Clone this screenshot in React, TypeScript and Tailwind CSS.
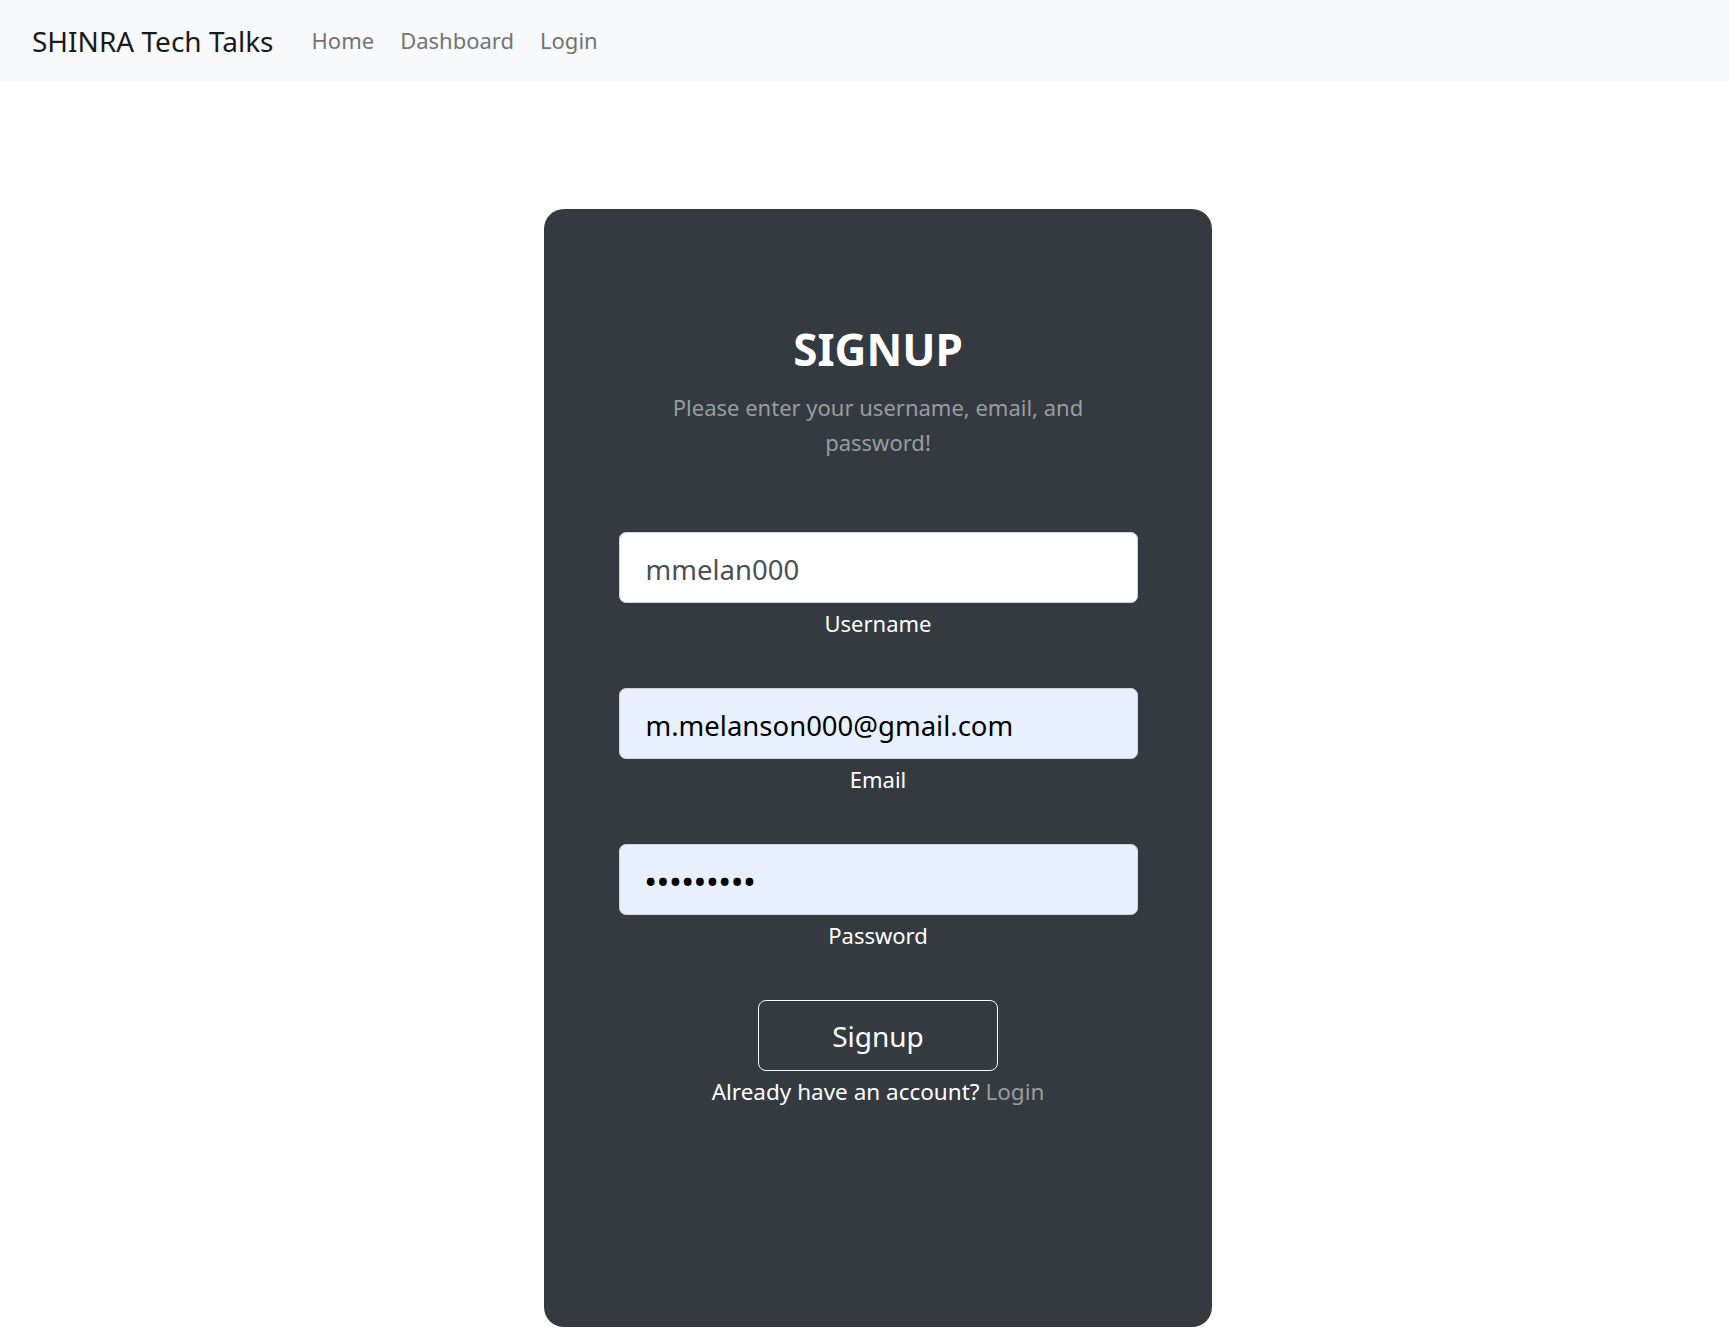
import React from "react";

function Field({ value, label, bg, color, dots }: { value: string; label: string; bg: string; color: string; dots?: boolean }) {
  return (
    <div className="flex flex-col items-center mb-[48px]">
      <input
        readOnly
        value={value}
        className={`w-[519px] h-[71px] rounded-[7px] border border-[#ced4da] px-[26px] pt-[4px] text-[27.5px] outline-none ${bg} ${color} ${dots ? "tracking-[2px] font-bold" : ""}`}
      />
      <div className="mt-[4px] text-[22px] leading-[33px] text-white">{label}</div>
    </div>
  );
}

export default function App() {
  return (
    <div className="min-h-[1337px] bg-white font-['Noto_Sans',sans-serif]">
      <nav className="h-[81px] bg-[#f8f9fa] flex items-center pl-[32px]">
        <span className="text-[28px] text-[#1a1a1a] mr-[38px]">SHINRA Tech Talks</span>
        <div className="flex items-center gap-[26px] text-[22px] text-[#737373]">
          <span>Home</span>
          <span>Dashboard</span>
          <span>Login</span>
        </div>
      </nav>
      <div className="flex justify-center pt-[128px] pl-[27px]">
        <div className="w-[668px] h-[1118px] rounded-[20px] bg-[#343a40] flex flex-col items-center pt-[114px]">
          <h2 className="text-[44px] leading-[53px] font-bold text-white">SIGNUP</h2>
          <p className="mt-[14px] max-w-[450px] text-center text-[22px] leading-[35px] text-[#999c9f]">
            Please enter your username, email, and password!
          </p>
          <div className="mt-[72px] flex flex-col items-center">
            <Field value="mmelan000" label="Username" bg="bg-white" color="text-[#495057]" />
            <Field value="m.melanson000@gmail.com" label="Email" bg="bg-[#e8f0fe]" color="text-black" />
            <Field value="•••••••••" label="Password" bg="bg-[#e8f0fe]" color="text-black" dots />
            <button className="w-[240px] h-[71px] rounded-[8px] border border-[#f8f9fa] text-[28px] text-white bg-transparent">
              Signup
            </button>
            <div className="mt-[4px] text-[22.5px] leading-[33px] text-white">
              Already have an account? <span className="text-[#999c9f]">Login</span>
            </div>
          </div>
        </div>
      </div>
    </div>
  );
}
